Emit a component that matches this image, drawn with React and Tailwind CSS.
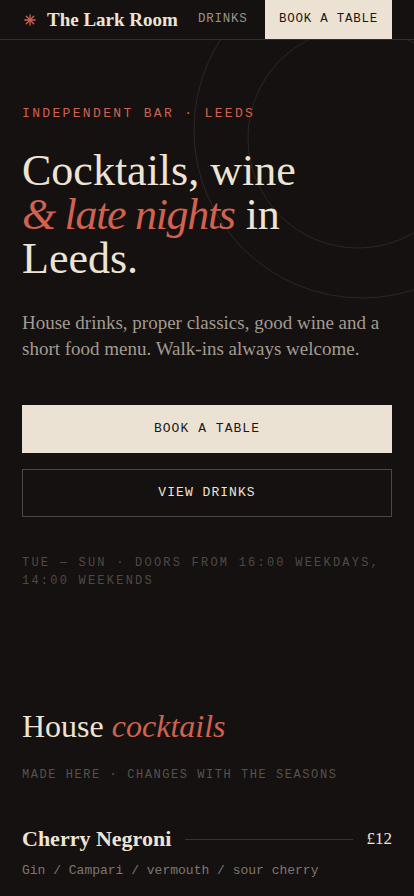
import React from "react";

const serif = { fontFamily: '"Liberation Serif", "Times New Roman", serif' };
const mono = { fontFamily: '"Liberation Mono", "DejaVu Sans Mono", monospace' };

function Asterisk() {
  return (
    <svg width="12" height="12" viewBox="0 0 12 12" className="shrink-0">
      <g stroke="#d0624f" strokeWidth="1.3" strokeLinecap="round">
        <line x1="6" y1="0.8" x2="6" y2="11.2" />
        <line x1="0.8" y1="6" x2="11.2" y2="6" />
        <line x1="2.3" y1="2.3" x2="9.7" y2="9.7" />
        <line x1="9.7" y1="2.3" x2="2.3" y2="9.7" />
      </g>
    </svg>
  );
}

export default function App() {
  return (
    <div className="min-h-[896px] w-full bg-[#151110] text-[#ede4d5]">
      <header className="relative z-10 flex h-10 items-stretch border-b border-[#332e2b] bg-[#151110]">
        <div className="flex items-center gap-[11px] pl-6">
          <Asterisk />
          <span style={serif} className="text-[19px] font-bold leading-none text-[#ede4d5]">
            The Lark Room
          </span>
        </div>
        <div className="flex flex-1 items-center pl-5">
          <span style={mono} className="text-[12.5px] tracking-[0.06em] text-[#9a928a]">
            DRINKS
          </span>
        </div>
        <div className="mr-[22px] flex items-center bg-[#ebe2d3] px-[14px]">
          <span style={mono} className="text-[12.5px] tracking-[0.06em] text-[#1b1715]">
            BOOK A TABLE
          </span>
        </div>
      </header>

      <section className="relative overflow-hidden px-[22px] pt-[64px] pb-[102px]">
        <svg
          className="pointer-events-none absolute left-0 top-0"
          width="414"
          height="320"
          viewBox="0 0 414 320"
        >
          <circle cx="362" cy="90" r="168" fill="none" stroke="#2c2725" strokeWidth="1" />
          <circle cx="358" cy="98" r="110" fill="none" stroke="#2c2725" strokeWidth="1" />
        </svg>
        <div className="relative">
          <p style={mono} className="text-[13px] leading-5 tracking-[0.18em] text-[#d0624f]">
            INDEPENDENT BAR · LEEDS
          </p>
          <h1 style={serif} className="mt-[25px] text-[44px] font-normal leading-[44px] text-[#ede4d5]">
            Cocktails, wine
            <br />
            <span className="italic tracking-[-0.03em] text-[#d0624f]">&amp; late nights</span> in
            <br />
            Leeds.
          </h1>
          <p style={serif} className="mt-[29px] text-[19px] leading-[26px] text-[#a39b92]">
            House drinks, proper classics, good wine and a short food menu. Walk-ins always welcome.
          </p>
          <div className="mt-[43px] flex flex-col gap-4">
            <div className="flex h-12 items-center justify-center bg-[#ebe2d3]">
              <span style={mono} className="text-[13px] tracking-[0.08em] text-[#1b1715]">
                BOOK A TABLE
              </span>
            </div>
            <div className="flex h-12 items-center justify-center border border-[#4e4844]">
              <span style={mono} className="text-[13px] tracking-[0.08em] text-[#ede4d5]">
                VIEW DRINKS
              </span>
            </div>
          </div>
          <p style={mono} className="mt-[37px] text-[12px] leading-[18px] tracking-[0.185em] text-[#4f4945]">
            TUE — SUN · DOORS FROM 16:00 WEEKDAYS, 14:00 WEEKENDS
          </p>
        </div>
      </section>

      <section className="px-[22px] pt-4">
        <h2 style={serif} className="text-[32px] leading-9 text-[#ede4d5]">
          House <span className="italic text-[#d0624f]">cocktails</span>
        </h2>
        <p style={mono} className="mt-[22px] text-[12px] leading-[18px] tracking-[0.13em] text-[#57514c]">
          MADE HERE · CHANGES WITH THE SEASONS
        </p>
        <div className="mt-[41px]">
          <div className="flex items-center gap-[14px]">
            <span style={serif} className="text-[22px] font-bold leading-7 text-[#ede4d5]">
              Cherry Negroni
            </span>
            <div className="h-px flex-1 bg-[#38322f]" />
            <span style={serif} className="text-[17px] leading-7 text-[#ede4d5]">
              £12
            </span>
          </div>
          <p style={mono} className="mt-2 text-[13px] leading-5 text-[#7d766f]">
            Gin / Campari / vermouth / sour cherry
          </p>
        </div>
      </section>
    </div>
  );
}
